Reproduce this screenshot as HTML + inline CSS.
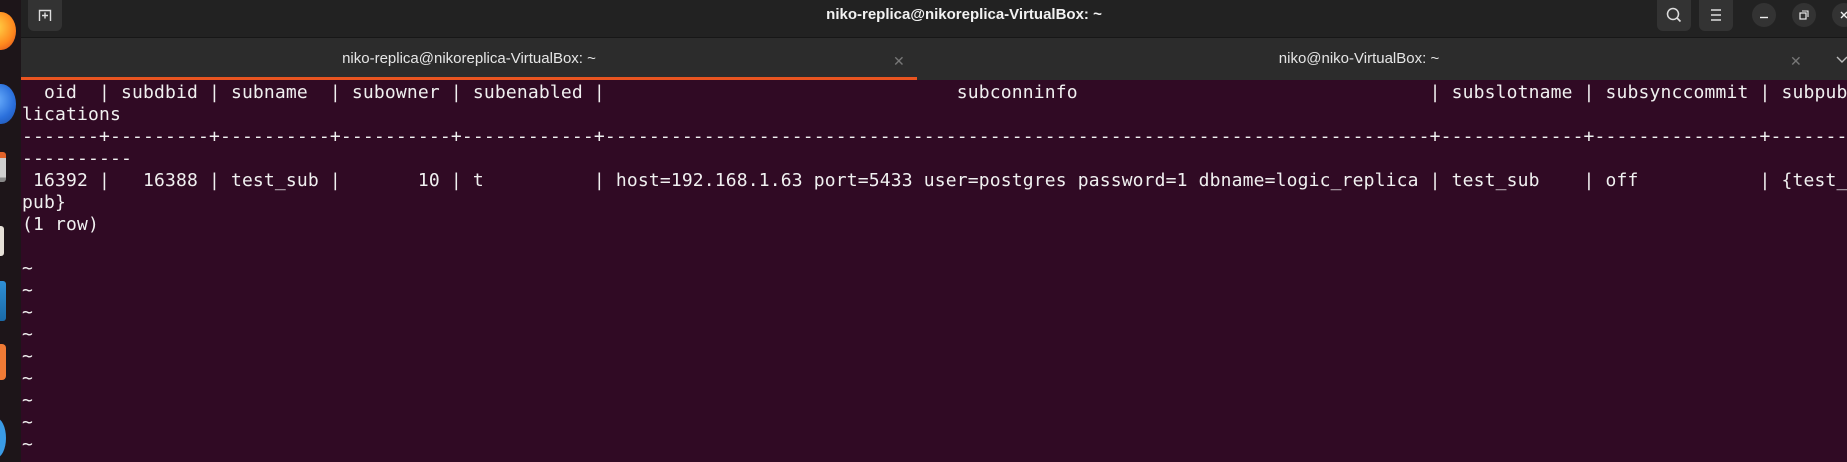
<!DOCTYPE html>
<html><head><meta charset="utf-8">
<style>
*{margin:0;padding:0;box-sizing:border-box}
body{width:1847px;height:462px;overflow:hidden;background:#300a24;position:relative;font-family:"Liberation Sans",sans-serif}
#dock{position:absolute;left:0;top:0;width:21px;height:462px;background:#1d1519}
#hdr{position:absolute;left:21px;top:0;right:0;height:38px;background:#222222;border-bottom:1px solid #171717}
#tabs{position:absolute;left:21px;top:38px;right:0;height:42px;background:#2c2c2c}
.btn{position:absolute;top:0;width:34px;height:31px;background:#333;border-radius:0 0 6px 6px}
.circ{position:absolute;top:3px;width:24px;height:24px;border-radius:50%;background:#333}
#title{position:absolute;left:0;width:1886px;top:6px;text-align:center;color:#f2f2f2;font-weight:bold;font-size:15px}
.tab{position:absolute;top:0;height:42px;line-height:42px;text-align:center;color:#e6e6e6;font-size:15px}
.term{position:absolute;left:22px;font-family:"DejaVu Sans Mono","Liberation Mono",monospace;font-size:18px;letter-spacing:0.16px;line-height:22px;height:22px;color:#f0f0f0;white-space:pre}
</style></head><body>
<div id="dock">
  <div style="position:absolute;left:-14px;top:12px;width:30px;height:38px;border-radius:50%;background:radial-gradient(circle at 30% 40%,#ffd84a,#ff8a1e 60%,#d8431c)"></div>
  <div style="position:absolute;left:-14px;top:84px;width:30px;height:40px;border-radius:50%;background:radial-gradient(circle at 30% 40%,#6fb3ff,#2a6fdb 60%,#1d4fa8)"></div>
  <div style="position:absolute;left:-6px;top:152px;width:12px;height:30px;border-radius:3px;background:linear-gradient(#e2642b 0 20%,#cfcfcf 20% 85%,#888 85%)"></div>
  <div style="position:absolute;left:-6px;top:226px;width:10px;height:30px;border-radius:3px;background:#e6e1d8"></div>
  <div style="position:absolute;left:-6px;top:281px;width:12px;height:40px;border-radius:3px;background:linear-gradient(#2f8fd6,#1a6aa8)"></div>
  <div style="position:absolute;left:-6px;top:344px;width:12px;height:36px;border-radius:4px;background:#f07a35"></div>
  <div style="position:absolute;left:-14px;top:418px;width:20px;height:40px;border-radius:50%;background:#3a9be6"></div>
</div>
<div id="hdr">
  <div class="btn" style="left:7px"><svg width="34" height="31" viewBox="0 0 34 31"><path d="M11.5 21V10.5h11V21M17 12.5v6M14 15.5h6" stroke="#ddd" stroke-width="1.4" fill="none"/></svg></div>
  <div id="title">niko-replica@nikoreplica-VirtualBox: ~</div>
  <div class="btn" style="left:1636px"><svg width="34" height="31" viewBox="0 0 34 31"><circle cx="16" cy="14" r="5.5" stroke="#ddd" stroke-width="1.5" fill="none"/><path d="M20 18l3.5 3.5" stroke="#ddd" stroke-width="1.6"/></svg></div>
  <div class="btn" style="left:1678px"><svg width="34" height="31" viewBox="0 0 34 31"><path d="M12 10h10M12 15h10M12 20h10" stroke="#ddd" stroke-width="1.4"/></svg></div>
  <div class="circ" style="left:1731px"><svg width="24" height="24"><path d="M8 14.5h8" stroke="#eee" stroke-width="1.4"/></svg></div>
  <div class="circ" style="left:1771px"><svg width="24" height="24"><rect x="8" y="10" width="6" height="6" stroke="#eee" stroke-width="1.2" fill="none"/><path d="M10 8h6v6" stroke="#eee" stroke-width="1.1" fill="none"/></svg></div>
  <div class="circ" style="left:1811px"><svg width="24" height="24"><path d="M9 9l6 6M15 9l-6 6" stroke="#eee" stroke-width="1.4"/></svg></div>
</div>
<div id="tabs">
  <div class="tab" style="left:0;width:896px">niko-replica@nikoreplica-VirtualBox: ~</div>
  <div style="position:absolute;left:0;top:39px;width:896px;height:3px;background:#e95420"></div>
  <div style="position:absolute;left:872px;top:15px;color:#777;font-size:14px">✕</div>
  <div class="tab" style="left:896px;width:884px">niko@niko-VirtualBox: ~</div>
  <div style="position:absolute;left:1769px;top:15px;color:#777;font-size:14px">✕</div>
  <svg style="position:absolute;left:1815px;top:15px" width="12" height="12"><path d="M1 4l5 5 5-5" stroke="#bbb" stroke-width="1.4" fill="none"/></svg>
</div>
<div class="term" style="top:82px">  oid  | subdbid | subname  | subowner | subenabled |                                subconninfo                                | subslotname | subsynccommit | subpub</div>
<div class="term" style="top:104px">lications</div>
<div class="term" style="top:126px">-------+---------+----------+----------+------------+---------------------------------------------------------------------------+-------------+---------------+-------</div>
<div class="term" style="top:148px">----------</div>
<div class="term" style="top:170px"> 16392 |   16388 | test_sub |       10 | t          | host=192.168.1.63 port=5433 user=postgres password=1 dbname=logic_replica | test_sub    | off           | {test_</div>
<div class="term" style="top:192px">pub}</div>
<div class="term" style="top:214px">(1 row)</div>
<div class="term" style="top:258px">~</div>
<div class="term" style="top:280px">~</div>
<div class="term" style="top:302px">~</div>
<div class="term" style="top:324px">~</div>
<div class="term" style="top:346px">~</div>
<div class="term" style="top:368px">~</div>
<div class="term" style="top:390px">~</div>
<div class="term" style="top:412px">~</div>
<div class="term" style="top:434px">~</div>
</body></html>
